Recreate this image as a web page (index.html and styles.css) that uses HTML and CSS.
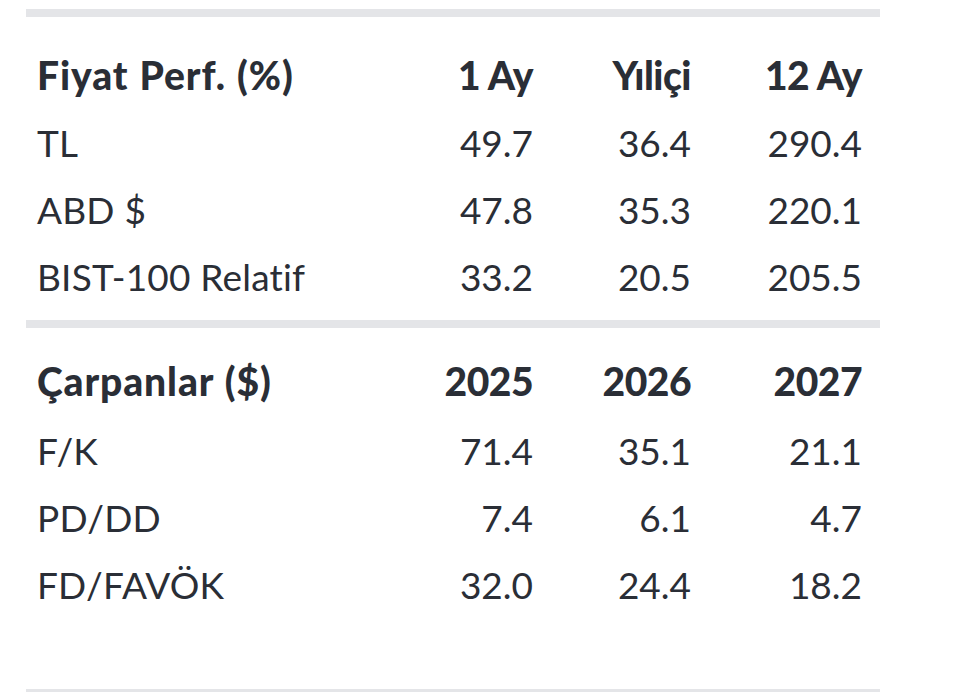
FILE: index.html
```html
<!DOCTYPE html>
<html lang="tr">
<head>
<meta charset="utf-8">
<link rel="stylesheet" href="styles.css">
</head>
<body>
<div class="sheet">
  <div class="bar bar-top"></div>
  <div class="grid grid-perf">
    <div class="cell label head">Fiyat Perf. (%)</div>
    <div class="cell num head">1 Ay</div>
    <div class="cell num head">Yıliçi</div>
    <div class="cell num head">12 Ay</div>

    <div class="cell label">TL</div>
    <div class="cell num">49.7</div>
    <div class="cell num">36.4</div>
    <div class="cell num">290.4</div>

    <div class="cell label">ABD $</div>
    <div class="cell num">47.8</div>
    <div class="cell num">35.3</div>
    <div class="cell num">220.1</div>

    <div class="cell label">BIST-100 Relatif</div>
    <div class="cell num">33.2</div>
    <div class="cell num">20.5</div>
    <div class="cell num">205.5</div>
  </div>
  <div class="bar bar-mid"></div>
  <div class="grid grid-mult">
    <div class="cell label head">Çarpanlar ($)</div>
    <div class="cell num head">2025</div>
    <div class="cell num head">2026</div>
    <div class="cell num head">2027</div>

    <div class="cell label">F/K</div>
    <div class="cell num">71.4</div>
    <div class="cell num">35.1</div>
    <div class="cell num">21.1</div>

    <div class="cell label">PD/DD</div>
    <div class="cell num">7.4</div>
    <div class="cell num">6.1</div>
    <div class="cell num">4.7</div>

    <div class="cell label">FD/FAVÖK</div>
    <div class="cell num">32.0</div>
    <div class="cell num">24.4</div>
    <div class="cell num">18.2</div>
  </div>
  <div class="bar bar-bottom"></div>
</div>
</body>
</html>
```
FILE: styles.css
```css
html, body {
  margin: 0;
  padding: 0;
  background: #ffffff;
}
body {
  width: 960px;
  height: 692px;
  overflow: hidden;
  font-family: Lato, "Open Sans", "Liberation Sans", sans-serif;
  color: #2a2e36;
}
.sheet {
  margin-left: 26px;
  width: 854px;
  padding-top: 9px;
}
.bar {
  height: 8px;
  background: #e4e5e8;
}
.grid {
  display: grid;
  grid-template-columns: 338px 158px 158px 171px;
  padding-left: 11px;
  align-items: center;
}
.grid-perf {
  grid-template-rows: 67px 67px 67px 67px;
  padding-top: 25px;
  padding-bottom: 10px;
}
.grid-mult {
  grid-template-rows: 70px 68px 67px 66px;
  padding-top: 18px;
  padding-bottom: 72px;
}
.cell {
  font-size: 37px;
  line-height: 1;
  white-space: nowrap;
}
.label {
  letter-spacing: 0.2px;
}
.num {
  text-align: right;
}
.head {
  font-weight: 900;
  font-size: 39px;
  letter-spacing: -0.5px;
}
.label.head {
  letter-spacing: 0.9px;
  word-spacing: 1px;
}
```
